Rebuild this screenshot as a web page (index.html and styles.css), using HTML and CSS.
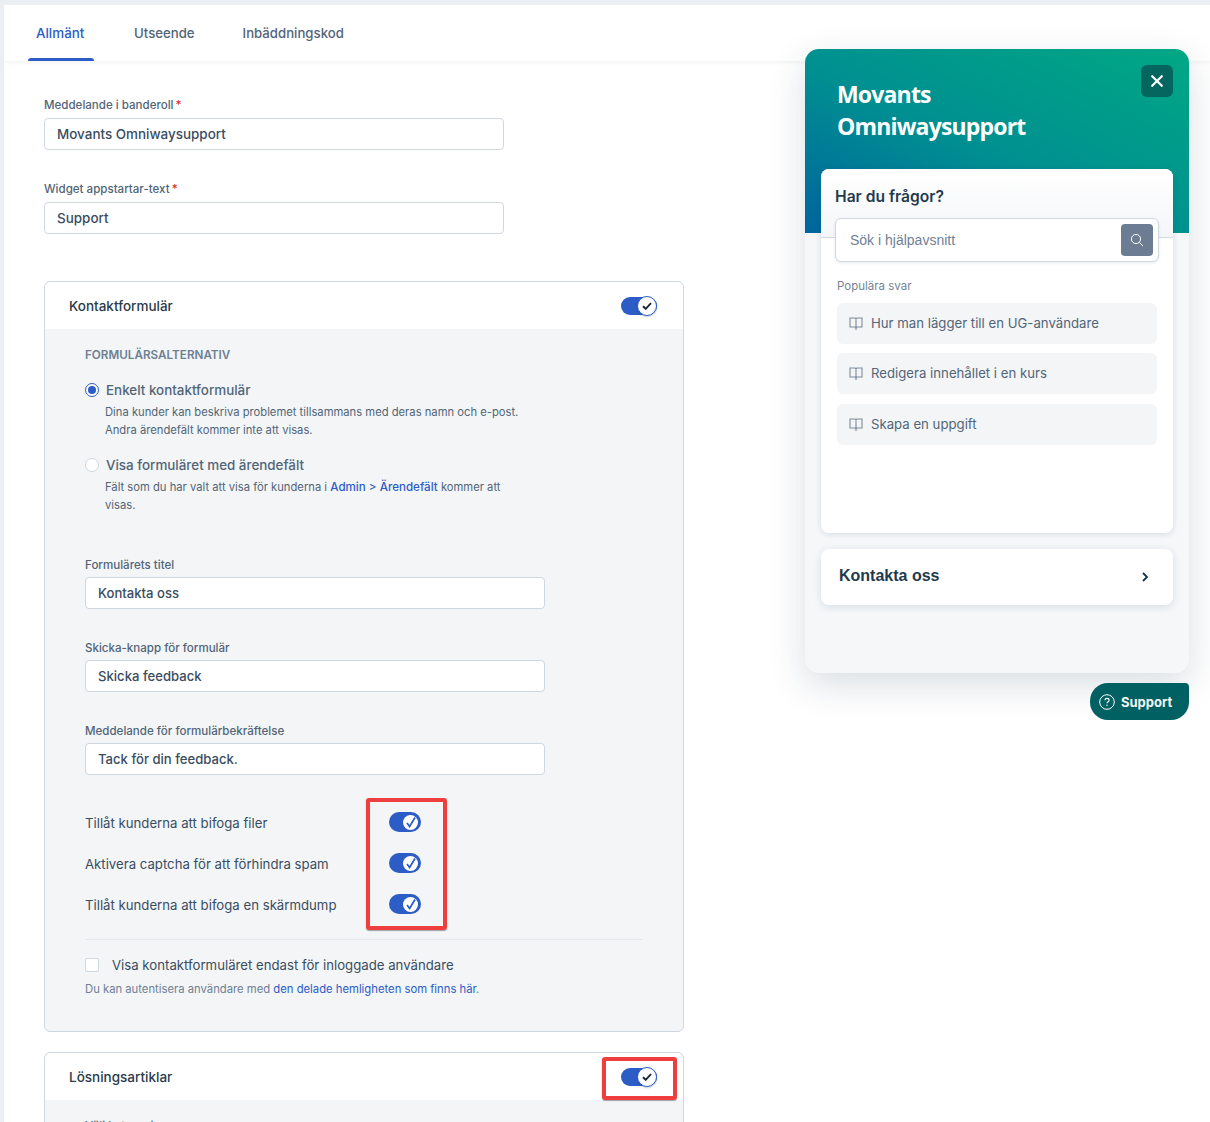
FILE: index.html
```html
<!DOCTYPE html>
<html lang="sv">
<head>
<meta charset="utf-8">
<title>Widget</title>
<link rel="stylesheet" href="styles.css">
</head>
<body>
<div class="app">
  <nav class="tabs">
    <a class="tab active">Allmänt</a>
    <a class="tab">Utseende</a>
    <a class="tab">Inbäddningskod</a>
  </nav>
  <main class="form">
    <div class="field top">
      <div class="label">Meddelande i banderoll<span class="req">*</span></div>
      <div class="input">Movants Omniwaysupport</div>
    </div>
    <div class="field top">
      <div class="label">Widget appstartar-text<span class="req">*</span></div>
      <div class="input">Support</div>
    </div>

    <section class="card first">
      <header class="card-head">
        <span>Kontaktformulär</span>
        <span class="switch big"><span class="knob"><svg width="10" height="8" viewBox="0 0 10 8"><path d="M1 4.2 3.7 6.8 9 1.2" fill="none" stroke="#1b2733" stroke-width="1.9"/></svg></span></span>
      </header>
      <div class="card-body">
        <h4 class="caps">FORMULÄRSALTERNATIV</h4>
        <div class="opt checked">
          <span class="radio on"></span><span class="opt-title">Enkelt kontaktformulär</span>
        </div>
        <p class="desc">Dina kunder kan beskriva problemet tillsammans med deras namn och e-post.<br>Andra ärendefält kommer inte att visas.</p>
        <div class="opt second">
          <span class="radio"></span><span class="opt-title">Visa formuläret med ärendefält</span>
        </div>
        <p class="desc">Fält som du har valt att visa för kunderna i <a class="link strong">Admin &gt; Ärendefält</a> kommer att visas.</p>

        <div class="field inner first-inner">
          <div class="label">Formulärets titel</div>
          <div class="input">Kontakta oss</div>
        </div>
        <div class="field inner">
          <div class="label">Skicka-knapp för formulär</div>
          <div class="input">Skicka feedback</div>
        </div>
        <div class="field inner">
          <div class="label">Meddelande för formulärbekräftelse</div>
          <div class="input">Tack för din feedback.</div>
        </div>

        <div class="toggles">
          <div class="toggle-row"><span class="toggle-label">Tillåt kunderna att bifoga filer</span><span class="switch small"><span class="knob"><svg width="12" height="12" viewBox="0 0 12 12"><path d="M2 7 4.6 10.4 10 1.5" fill="none" stroke="#2b5ac8" stroke-width="1.7"/></svg></span></span></div>
          <div class="toggle-row"><span class="toggle-label">Aktivera captcha för att förhindra spam</span><span class="switch small"><span class="knob"><svg width="12" height="12" viewBox="0 0 12 12"><path d="M2 7 4.6 10.4 10 1.5" fill="none" stroke="#2b5ac8" stroke-width="1.7"/></svg></span></span></div>
          <div class="toggle-row"><span class="toggle-label">Tillåt kunderna att bifoga en skärmdump</span><span class="switch small"><span class="knob"><svg width="12" height="12" viewBox="0 0 12 12"><path d="M2 7 4.6 10.4 10 1.5" fill="none" stroke="#2b5ac8" stroke-width="1.7"/></svg></span></span></div>
          <span class="mark mark-toggles"></span>
        </div>

        <hr class="rule">
        <div class="check-row"><span class="checkbox"></span><span class="check-label">Visa kontaktformuläret endast för inloggade användare</span></div>
        <p class="note">Du kan autentisera användare med <a class="link">den delade hemligheten som finns här</a>.</p>
      </div>
    </section>

    <section class="card second-card">
      <header class="card-head">
        <span>Lösningsartiklar</span>
        <span class="switch big"><span class="knob"><svg width="10" height="8" viewBox="0 0 10 8"><path d="M1 4.2 3.7 6.8 9 1.2" fill="none" stroke="#1b2733" stroke-width="1.9"/></svg></span></span>
        <span class="mark mark-head"></span>
      </header>
      <div class="card-body">
        <h4 class="plain">Välj kategorier</h4>
      </div>
    </section>
  </main>

  <aside class="widget">
    <div class="hero">
      <h1>Movants<br>Omniwaysupport</h1>
      <button class="close"><svg width="12" height="12" viewBox="0 0 12 12"><path d="M1.2 1.2 10.8 10.8M10.8 1.2 1.2 10.8" stroke="#fff" stroke-width="2.2" stroke-linecap="round"/></svg></button>
    </div>
    <div class="panel">
      <div class="panel-top">
        <h2>Har du frågor?</h2>
        <div class="search">
          <span class="search-text">Sök i hjälpavsnitt</span>
          <span class="search-btn"><svg width="14" height="14" viewBox="0 0 14 14"><circle cx="6" cy="6" r="4.6" fill="none" stroke="#fff" stroke-width="1"/><path d="M9.4 9.4 13 13" stroke="#fff" stroke-width="1"/></svg></span>
        </div>
      </div>
      <div class="panel-main">
        <div class="pop">Populära svar</div>
        <a class="article"><svg class="book" width="14" height="14" viewBox="0 0 14 14"><path d="M1 2H6.2L7 2.8 7.8 2H13V11H7.8L7 11.8 6.2 11H1ZM7 2.8V11.8M5.8 13H8.2" fill="none" stroke="#7e8c9e" stroke-width="1.1"/></svg>Hur man lägger till en UG-användare</a>
        <a class="article"><svg class="book" width="14" height="14" viewBox="0 0 14 14"><path d="M1 2H6.2L7 2.8 7.8 2H13V11H7.8L7 11.8 6.2 11H1ZM7 2.8V11.8M5.8 13H8.2" fill="none" stroke="#7e8c9e" stroke-width="1.1"/></svg>Redigera innehållet i en kurs</a>
        <a class="article"><svg class="book" width="14" height="14" viewBox="0 0 14 14"><path d="M1 2H6.2L7 2.8 7.8 2H13V11H7.8L7 11.8 6.2 11H1ZM7 2.8V11.8M5.8 13H8.2" fill="none" stroke="#7e8c9e" stroke-width="1.1"/></svg>Skapa en uppgift</a>
      </div>
    </div>
    <div class="contact">
      <span>Kontakta oss</span>
      <svg width="8" height="10" viewBox="0 0 8 10"><path d="M2 1 6 5 2 9" fill="none" stroke="#12344d" stroke-width="1.8"/></svg>
    </div>
  </aside>
  <button class="launcher"><svg width="16" height="16" viewBox="0 0 16 16"><circle cx="8" cy="8" r="7.3" fill="none" stroke="#fff" stroke-width="1"/><path d="M5.9 6.2C6 5 6.9 4.4 8 4.4c1.2 0 2.1.7 2.1 1.8 0 1.5-2.1 1.6-2.1 3.1" fill="none" stroke="#fff" stroke-width="1.1"/><circle cx="8" cy="11.3" r=".7" fill="#fff"/></svg>Support</button>
</div>
</body>
</html>
```
FILE: styles.css
```css
* { box-sizing: border-box; }
html, body { margin: 0; padding: 0; height: 1122px; overflow: hidden; }
body { background: #ebeff3; font-family: Inter, "Noto Sans", sans-serif; color: #12344d; }
.app { position: relative; margin: 5px 0 0 4px; height: 1117px; background: #fff; overflow: hidden; }

.tabs { display: flex; height: 56px; padding-left: 24px; box-shadow: 0 1px 4px rgba(18,52,77,.07); }
.tab { position: relative; display: block; height: 56px; padding: 19px 8px 0; margin-right: 32px; font-size: 13.2px; line-height: 18px; font-weight: 500; color: #526577; }
.tab.active { color: #2c5cc5; width: 66px; font-size: 13.4px; }
.tab.active::after { content: ""; position: absolute; left: 0; right: 0; bottom: 0; height: 3px; background: #2c5cc5; border-radius: 3px 3px 0 0; }

.form { padding: 35px 0 0 40px; width: 680px; }
.field.top { width: 460px; margin-bottom: 30px; }
.label { font-size: 11.55px; line-height: 18px; height: 22px; color: #526577; font-weight: 500; }
.req { color: #d72d30; margin-left: 2px; }
.input { height: 32px; width: 460px; border: 1px solid #cfd7df; border-radius: 4px; background: #fff; padding: 0 12px; font-size: 13.45px; line-height: 30px; font-weight: 500; color: #3a4d5f; }
.field.inner .input { font-size: 13.1px; }

.card { border: 1px solid #cfd7df; border-radius: 6px; overflow: visible; width: 640px; background: #f3f5f7; }
.card.first { margin-top: 47px; height: 751px; }
.card.second-card { margin-top: 20px; height: 200px; }
.card-head { position: relative; display: flex; align-items: center; justify-content: space-between; height: 47px; padding: 0 26px 0 24px; background: #fff; border-radius: 6px 6px 0 0; font-size: 13.5px; font-weight: 500; color: #2a3b4a; }
.card-body { padding: 17px 40px 0; }

.switch { display: block; position: relative; background: #2c5cc5; border-radius: 10px; flex: none; }
.switch.big { width: 36px; height: 18px; }
.switch.big .knob { position: absolute; right: 0; top: -1px; width: 20px; height: 20px; background: #fff; border: 1.5px solid #2c5cc5; border-radius: 50%; display: flex; align-items: center; justify-content: center; box-shadow: 0 1px 2px rgba(18,52,77,.25); }
.switch.small { width: 32px; height: 20px; top: -1px; }
.switch.small .knob { position: absolute; right: 3px; top: 2.5px; width: 15px; height: 15px; background: #fff; border-radius: 50%; display: flex; align-items: center; justify-content: center; }

.caps { margin: 0; font-size: 11.7px; line-height: 18px; font-weight: 600; color: #6f8093; }
.opt { display: flex; align-items: center; height: 20px; margin-top: 16px; }
.opt.second { margin-top: 16px; }
.radio { width: 14px; height: 14px; border-radius: 50%; background: #fff; border: 1px solid #cfd7df; margin-right: 7px; flex: none; }
.radio.on { border: 1.5px solid #2c5cc5; position: relative; }
.radio.on::after { content: ""; position: absolute; inset: 2px; border-radius: 50%; background: #2c5cc5; }
.opt-title { font-size: 13.4px; font-weight: 500; color: #526577; }
.desc { margin: 3px 0 0 20px; width: 425px; font-size: 11.22px; line-height: 18px; color: #526577; }
.link { color: #2c5cc5; }
.link.strong { font-weight: 500; font-size: 11.6px; }

.field.inner { margin-bottom: 30px; }
.field.inner .label { height: 21px; }
.field.first-inner { margin-top: 42px; }

.toggles { position: relative; margin-top: -7px; padding-top: 4.5px; }
.toggle-row { display: flex; align-items: center; height: 41px; position: relative; width: 336px; justify-content: space-between; }
.toggle-label { font-size: 13.2px; color: #3a4d5f; }
.mark { position: absolute; border: 4px solid #ee3e3e; border-radius: 3px; box-shadow: 0 1px 1px rgba(0,0,0,.35); }
.mark-toggles { left: 281px; top: 0; width: 81px; height: 132px; }
.mark-head { left: 557px; top: 4px; width: 75px; height: 43px; }

.rule { border: 0; border-top: 1px solid #e4e8ec; margin: 13.5px -1px 0 0; width: 558px; }
.check-row { display: flex; align-items: center; margin-top: 15px; height: 20px; }
.checkbox { width: 14px; height: 14px; background: #fff; border: 1px solid #cfd7df; border-radius: 2px; margin-right: 13px; flex: none; }
.check-label { font-size: 13.2px; color: #3a4d5f; }
.note { margin: 5px 0 0; font-size: 11.27px; line-height: 18px; color: #6f8093; }
.plain { margin: 0; font-size: 11.55px; line-height: 18px; font-weight: 500; color: #526577; }

.widget { position: absolute; left: 801px; top: 44px; width: 384px; height: 624px; border-radius: 14px; background: #f5f7f9; box-shadow: 0 12px 36px rgba(18,52,77,.16); padding: 120px 16px 0; }
.hero { position: absolute; left: 0; top: 0; right: 0; height: 184px; border-radius: 14px 14px 0 0; background: linear-gradient(to top right, #00649e 0%, #008f91 45%, #00a884 100%); }
.hero h1 { margin: 0; position: absolute; left: 32px; top: 29px; font-family: "Open Sans", sans-serif; font-size: 23px; letter-spacing: -0.82px; line-height: 32px; font-weight: 700; color: #fff; }
.close { position: absolute; right: 16px; top: 16px; width: 32px; height: 32px; border: 0; padding: 0; border-radius: 6px; background: #05665f; display: flex; align-items: center; justify-content: center; }
.panel { position: relative; height: 364px; background: #fff; border-radius: 8px; box-shadow: 0 1px 6px rgba(18,52,77,.14); }
.panel-top { height: 69px; padding: 18px 14px 0; border-bottom: 1px solid #d4dae1; background: linear-gradient(#fff, #f5f6f9); border-radius: 8px 8px 0 0; position: relative; }
.panel-top h2 { margin: 0 0 11px; font-size: 15.6px; line-height: 20px; font-weight: 600; color: #1f3a4d; }
.search { display: flex; align-items: center; justify-content: space-between; height: 44px; width: 324px; background: #fff; border: 1px solid #cfd7df; border-radius: 6px; padding: 0 5px 0 14px; box-shadow: 0 1px 3px rgba(18,52,77,.1); }
.search-text { font-family: "Liberation Sans", Arial, sans-serif; font-size: 14px; color: #6f8196; }
.search-btn { width: 32px; height: 32px; background: #6b7c93; border-radius: 4px; display: flex; align-items: center; justify-content: center; }
.panel-main { padding: 40px 16px 0; }
.pop { font-size: 11.5px; line-height: 16px; color: #748394; margin-bottom: 9px; }
.article { display: flex; align-items: center; height: 41px; background: #f3f5f7; border-radius: 6px; padding: 0 0 1px 12px; font-size: 13.2px; color: #526577; margin-bottom: 9.4px; }
.book { margin-right: 8px; flex: none; }
.contact { display: flex; align-items: center; justify-content: space-between; height: 56px; margin-top: 16px; padding: 0 24px 0 18px; background: #fff; border-radius: 8px; box-shadow: 0 2px 8px rgba(18,52,77,.12); font-family: "Liberation Sans", Arial, sans-serif; font-size: 16px; font-weight: 700; color: #1f3a4d; position: relative; }
.contact span { position: relative; top: -1px; }
.launcher { position: absolute; left: 1086px; top: 678px; width: 99px; height: 37px; border: 0; padding: 0 0 0 9px; display: flex; align-items: center; gap: 6px; background: #016061; border-radius: 18px 4px 18px 18px; color: #f2f7f7; font-family: Inter, sans-serif; font-size: 13px; font-weight: 700; }
```
